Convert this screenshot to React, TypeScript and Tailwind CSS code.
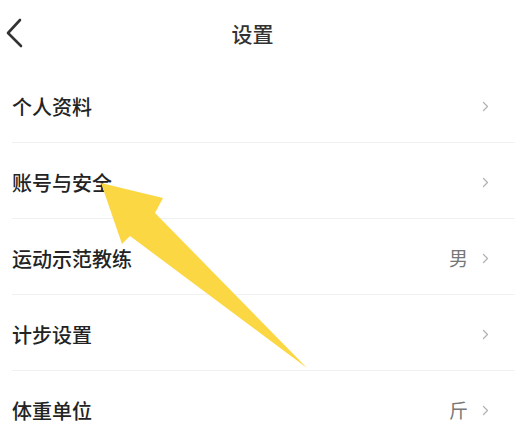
import React from "react";

const rows: { label: string; value?: string }[] = [
  { label: "个人资料" },
  { label: "账号与安全" },
  { label: "运动示范教练", value: "男" },
  { label: "计步设置" },
  { label: "体重单位", value: "斤" },
];

const Chevron = () => (
  <svg width="7" height="11" viewBox="0 0 7 11" fill="none">
    <path d="M1.5 1.5 L5.5 5.5 L1.5 9.5" stroke="#b3b3b3" strokeWidth="1.3" strokeLinecap="round" strokeLinejoin="round" />
  </svg>
);

export default function App() {
  return (
    <div
      className="relative w-[515px] h-[441px] overflow-hidden bg-white"
      style={{ fontFamily: '"Noto Sans CJK SC", "Noto Sans", sans-serif' }}
    >
      {/* header */}
      <div className="relative flex h-[67px] items-center justify-center">
        <button className="absolute left-[4px] top-[16px] p-0">
          <svg width="24" height="32" viewBox="0 0 24 32" fill="none">
            <path d="M16 4 L4 17 L17 30" stroke="#333" strokeWidth="2.6" strokeLinecap="round" strokeLinejoin="round" />
          </svg>
        </button>
        <span className="pr-[10px] text-[21px] font-medium text-[#333]">设置</span>
      </div>

      {/* list */}
      <div className="flex flex-col">
        {rows.map((r) => (
          <div
            key={r.label}
            className="ml-3 flex h-[76px] items-center justify-between border-b border-[#f1f1f1] pr-[26px]"
          >
            <span className="pt-[5px] text-[20px] font-medium text-[#232323]">{r.label}</span>
            <div className="flex items-center gap-[14px] pt-[4px]">
              {r.value && <span className="text-[19px] text-[#777]">{r.value}</span>}
              <Chevron />
            </div>
          </div>
        ))}
      </div>

      {/* annotation arrow */}
      <svg className="pointer-events-none absolute left-0 top-0" width="515" height="441" viewBox="0 0 515 441">
        <polygon
          points="101,183 163,198 155,213 307,368 130,236 122,244"
          fill="#fbd744"
        />
      </svg>
    </div>
  );
}
